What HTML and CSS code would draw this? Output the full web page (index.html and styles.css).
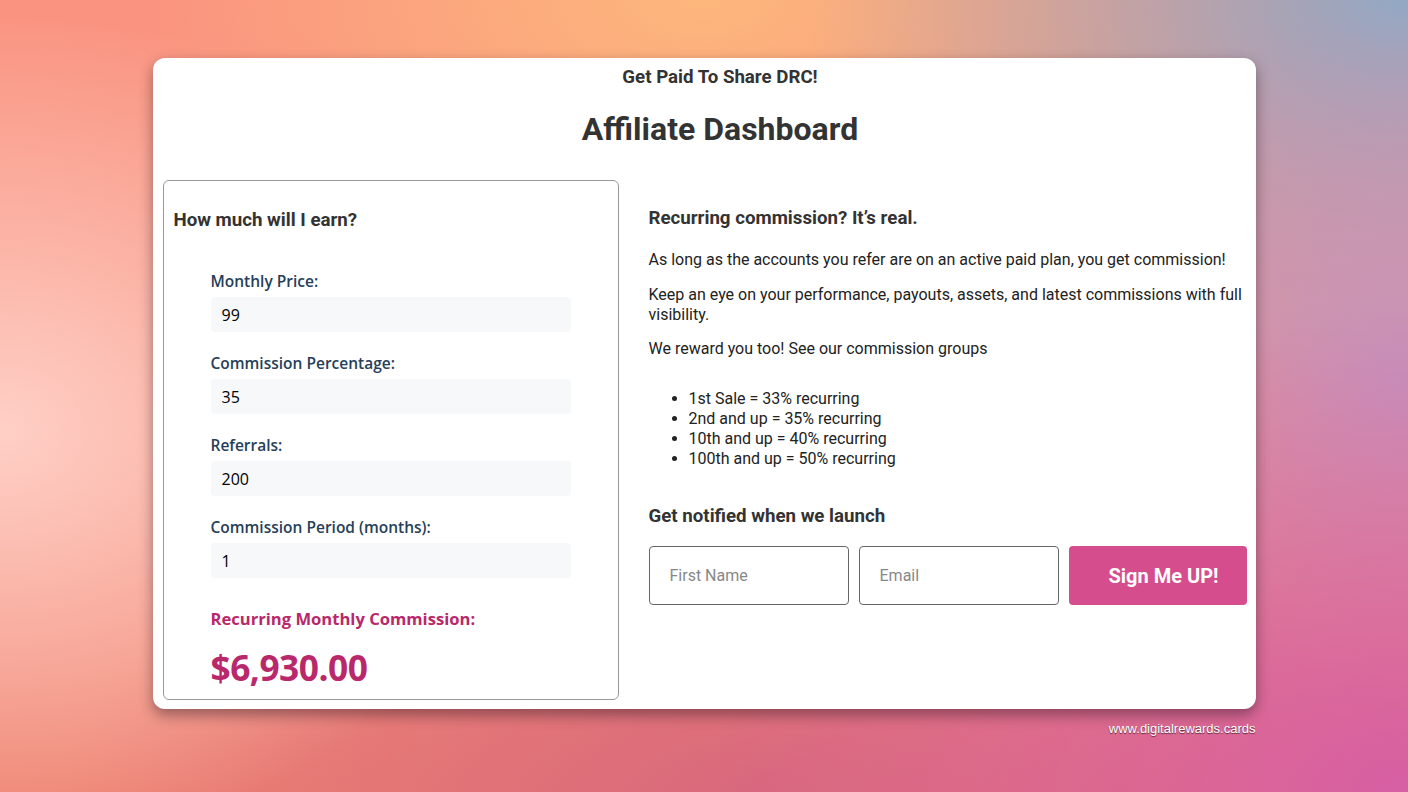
FILE: index.html
```html
<!DOCTYPE html>
<html lang="en">
<head>
    <meta charset="UTF-8">
    <meta name="viewport" content="width=device-width, initial-scale=1.0">
    <title>Affiliate Dashboard</title>
    <link rel="stylesheet" href="styles.css">
</head>
<body>

<div class="stage">
    <div class="panel">
        <div class="panel-head">
            <p class="tagline">Get Paid To Share DRC!</p>
            <h1>Affiliate Dashboard</h1>
        </div>

        <div class="columns">
            <!-- Earnings calculator -->
            <div class="calculator">
                <h3>How much will I earn?</h3>
                <div class="calc-form">
                    <label for="price">Monthly Price:</label>
                    <input type="text" id="price" value="99">

                    <label for="percent">Commission Percentage:</label>
                    <input type="text" id="percent" value="35">

                    <label for="referrals">Referrals:</label>
                    <input type="text" id="referrals" value="200">

                    <label for="period">Commission Period (months):</label>
                    <input type="text" id="period" value="1">

                    <p class="result-label">Recurring Monthly Commission:</p>
                    <p class="result" id="result">$6,930.00</p>
                </div>
            </div>

            <!-- Info and signup -->
            <div class="info">
                <h3>Recurring commission? It’s real.</h3>
                <p>As long as the accounts you refer are on an active paid plan, you get commission!</p>
                <p>Keep an eye on your performance, payouts, assets, and latest commissions with full visibility.</p>
                <p>We reward you too! See our commission groups</p>
                <ul>
                    <li>1st Sale = 33% recurring</li>
                    <li>2nd and up = 35% recurring</li>
                    <li>10th and up = 40% recurring</li>
                    <li>100th and up = 50% recurring</li>
                </ul>

                <h3 class="notify">Get notified when we launch</h3>
                <form class="signup">
                    <input type="text" placeholder="First Name">
                    <input type="email" placeholder="Email">
                    <button type="button">Sign Me UP!</button>
                </form>
            </div>
        </div>
    </div>
    <div class="site-url">www.digitalrewards.cards</div>
</div>

</body>
</html>
```

FILE: styles.css
```css
/* Page backdrop */
body {
    margin: 0;
    padding: 0;
    height: 792px;
    overflow: hidden;
    font-family: Roboto, "Liberation Sans", sans-serif;
    color: #222;
    background-color: #f2907c;
    background-image:
        radial-gradient(ellipse 520px 420px at 0px 430px, #ffcfc6 0%, rgba(255, 207, 198, 0) 100%),
        radial-gradient(ellipse 700px 480px at 1408px 792px, #d65ea4 0%, rgba(214, 94, 164, 0) 100%),
        radial-gradient(ellipse 420px 380px at 1408px 380px, #c592bc 0%, rgba(197, 146, 188, 0) 100%),
        radial-gradient(ellipse 600px 420px at 1408px 0px, #92a8c4 0%, rgba(146, 168, 196, 0) 100%),
        radial-gradient(ellipse 560px 300px at 700px 0px, #fdb77c 0%, rgba(253, 183, 124, 0) 100%),
        radial-gradient(ellipse 700px 300px at 760px 792px, #d8687c 0%, rgba(216, 104, 124, 0) 100%),
        linear-gradient(180deg, #fa9380 0%, #f59480 60%, #ee8270 100%);
}

.stage {
    width: 1103px;
    margin: 0 auto;
    padding-top: 58px;
}

/* White card */
.panel {
    background: #fff;
    border-radius: 12px;
    padding: 10px 9px 9px 10px;
    box-shadow: 0 6px 14px rgba(40, 20, 30, 0.45);
}

.panel-head {
    padding-left: 31px;
}

.tagline {
    margin: 0;
    text-align: center;
    font-size: 18.7px;
    font-weight: 700;
    line-height: 18px;
    color: #333;
}

h1 {
    margin: 24px 0 32px;
    text-align: center;
    font-size: 32px;
    line-height: 38px;
    font-weight: 700;
    color: #333;
}

.columns {
    display: flex;
    align-items: flex-start;
}

/* Calculator box */
.calculator {
    flex-shrink: 0;
    width: 456px;
    height: 520px;
    box-sizing: border-box;
    border: 1px solid #999;
    border-radius: 6px;
    padding: 28px 10px 0;
}

.calculator h3 {
    margin: 0 0 40px;
    font-size: 18.72px;
    line-height: 22px;
    font-weight: 700;
    color: #333;
}

.calc-form {
    padding-left: 37px;
    width: 360px;
    display: flex;
    flex-direction: column;
    font-family: "Open Sans", "Noto Sans", sans-serif;
}

.calc-form label {
    font-size: 15.5px;
    font-weight: 600;
    line-height: 20px;
    color: #26405a;
    margin-bottom: 6px;
}

.calc-form input {
    height: 35px;
    box-sizing: border-box;
    border: none;
    border-radius: 4px;
    background: #f7f8fa;
    padding: 0 11px;
    font-family: "Open Sans", "Noto Sans", sans-serif;
    font-size: 16px;
    color: #000;
    margin-bottom: 21px;
    outline: none;
}

.result-label {
    margin: 9px 0 0;
    font-size: 16.6px;
    font-weight: 700;
    line-height: 22px;
    color: #b8286a;
}

.result {
    margin: 17px 0 0;
    font-size: 35.3px;
    font-weight: 700;
    line-height: 40px;
    letter-spacing: -0.5px;
    color: #b8286a;
}

/* Right column */
.info {
    flex: 1;
    padding: 27px 0 0 30px;
}

.info h3 {
    margin: 0 0 21px;
    font-size: 18.72px;
    line-height: 22px;
    font-weight: 700;
    color: #333;
}

.info p {
    margin: 0 0 14.5px;
    font-size: 16px;
    line-height: 20px;
    color: #222;
}

.info ul {
    margin: 30px 0 36px;
    padding-left: 40px;
    font-size: 16px;
    line-height: 20px;
}

.info h3.notify {
    margin-bottom: 19px;
}

.signup {
    display: flex;
    gap: 10px;
}

.signup input {
    width: 200px;
    height: 59px;
    box-sizing: border-box;
    border: 1px solid #666;
    border-radius: 4px;
    padding: 0 20px;
    font-family: Roboto, "Liberation Sans", sans-serif;
    font-size: 16px;
    color: #333;
}

.signup input::placeholder {
    color: #888;
}

.signup button {
    flex: 1;
    height: 59px;
    border: none;
    border-radius: 4px;
    padding: 0 0 0 12px;
    background-color: #d54d8d;
    color: #fff;
    font-family: Roboto, "Liberation Sans", sans-serif;
    font-size: 20px;
    font-weight: 700;
    cursor: pointer;
}

.site-url {
    text-align: right;
    margin-top: 12px;
    font-family: "Liberation Sans", Arial, sans-serif;
    font-size: 13px;
    color: #fff;
    text-shadow: 0 1px 1px rgba(0, 0, 0, 0.6);
}
```
